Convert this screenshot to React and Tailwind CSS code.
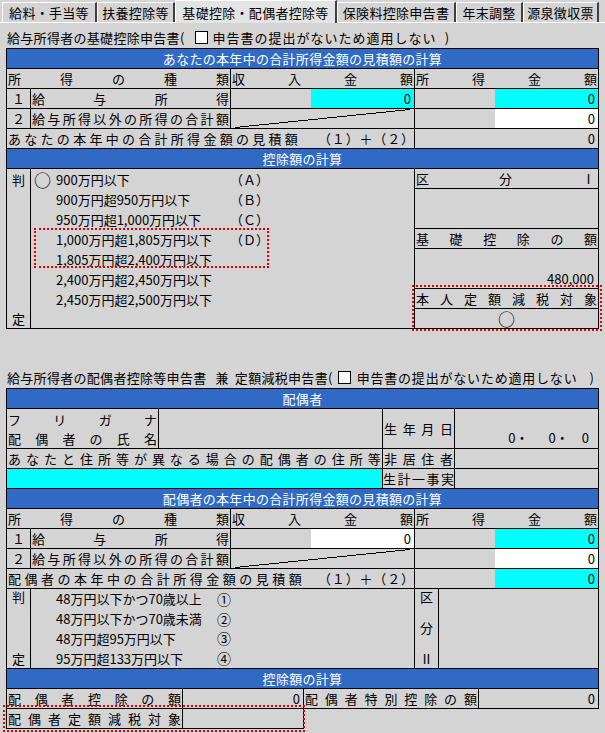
import React from 'react';

// spread characters across the cell, like the fixed-pitch form labels
const Sp = ({ t, className = '' }) => (
  <div className={`flex justify-between ${className}`}>
    {Array.from(t).map((c, i) => (
      <span key={i}>{c}</span>
    ))}
  </div>
);

const Head = ({ children }) => (
  <div className="flex h-[20px] items-center justify-center border-b border-black bg-[#316ac5] text-white tracking-[0.3px]">
    {children}
  </div>
);

const Box = ({ className = '' }) => (
  <span className={`inline-block h-[13px] w-[13px] shrink-0 border border-black bg-white ${className}`} />
);

const Zero = ({ bg }) => (
  <div className={`flex flex-1 items-center justify-end pr-[3px] ${bg}`}>0</div>
);

const Diagonal = () => (
  <svg
    className="absolute inset-0 h-full w-full"
    viewBox="0 0 183 19"
    preserveAspectRatio="none"
    shapeRendering="crispEdges"
  >
    <line x1="4" y1="18.5" x2="179" y2="0.5" stroke="#000" strokeWidth="1" />
  </svg>
);

const IncomeBlock = ({ incomeBg, totalLabel, totalW, totalBg }) => (
  <>
    <div className="flex h-[20px] border-b border-black">
      <div className="flex w-[224px] items-center border-r border-black px-px">
        <Sp t="所得の種類" className="w-full" />
      </div>
      <div className="flex w-[184px] items-center border-r border-black px-px">
        <Sp t="収入金額" className="w-full" />
      </div>
      <div className="flex flex-1 items-center px-px">
        <Sp t="所得金額" className="w-full" />
      </div>
    </div>
    <div className="flex h-[20px] border-b border-black">
      <div className="flex w-[24px] items-center justify-center border-r border-black">１</div>
      <div className="flex w-[200px] items-center border-r border-black px-px">
        <Sp t="給与所得" className="w-full" />
      </div>
      <div className="flex w-[184px] border-r border-black">
        <div className="w-[80px]" />
        <Zero bg={incomeBg} />
      </div>
      <div className="flex flex-1">
        <div className="w-[80px]" />
        <Zero bg="bg-[#00ffff]" />
      </div>
    </div>
    <div className="flex h-[20px] border-b border-black">
      <div className="flex w-[24px] items-center justify-center border-r border-black">２</div>
      <div className="flex w-[200px] items-center border-r border-black px-px">
        <Sp t="給与所得以外の所得の合計額" className="w-full" />
      </div>
      <div className="relative w-[184px] border-r border-black">
        <Diagonal />
      </div>
      <div className="flex flex-1">
        <div className="w-[80px]" />
        <Zero bg="bg-white" />
      </div>
    </div>
    <div className="flex h-[20px] border-b border-black">
      <div className="flex w-[408px] items-center border-r border-black pl-px">
        <Sp t={totalLabel} className={totalW} />
        <Sp t="（１）＋（２）" className="ml-auto w-[96px]" />
      </div>
      <div className="flex flex-1">
        <div className="w-[80px]" />
        <Zero bg={totalBg} />
      </div>
    </div>
  </>
);

const tabs = [
  { label: '給料・手当等', w: 'w-[95px]' },
  { label: '扶養控除等', w: 'w-[78px]' },
  { label: '基礎控除・配偶者控除等', w: 'w-[162px]', active: true },
  { label: '保険料控除申告書', w: 'w-[119px]' },
  { label: '年末調整', w: 'w-[67px]' },
  { label: '源泉徴収票', w: 'w-[76px]' },
];

const basicItems = [
  { text: '900万円以下', key: '（Ａ）', mark: true },
  { text: '900万円超950万円以下', key: '（Ｂ）' },
  { text: '950万円超1,000万円以下', key: '（Ｃ）' },
  { text: '1,000万円超1,805万円以下', key: '（Ｄ）' },
  { text: '1,805万円超2,400万円以下' },
  { text: '2,400万円超2,450万円以下' },
  { text: '2,450万円超2,500万円以下' },
];

const spouseItems = [
  { text: '48万円以下かつ70歳以上', key: '①' },
  { text: '48万円以下かつ70歳未満', key: '②' },
  { text: '48万円超95万円以下', key: '③' },
  { text: '95万円超133万円以下', key: '④' },
];

export default function App() {
  return (
    <div className="relative h-[733px] w-[605px] overflow-hidden bg-[#d4d4d4] font-['Noto_Sans_CJK_JP','Noto_Sans_CJK_SC',sans-serif] text-[13px] leading-none text-black">
      {/* Tabs */}
      <div className="flex h-[22px] pl-[2px]">
        {tabs.map((tab) =>
          tab.active ? (
            <div
              key={tab.label}
              className={`relative z-10 flex h-[23px] items-center justify-center border-l border-t border-r-2 border-white border-r-[#404040] bg-[#e4e4e4] tracking-[0.3px] ${tab.w}`}
            >
              {tab.label}
            </div>
          ) : (
            <div
              key={tab.label}
              className={`mt-[2px] flex h-[20px] items-center justify-center border-l border-t border-r-2 border-white border-r-[#404040] tracking-[0.3px] ${tab.w}`}
            >
              {tab.label}
            </div>
          )
        )}
      </div>

      <div className="border-t border-white">
        {/* 基礎控除申告書 */}
        <div className="flex h-[25px] items-center pl-[7px] pt-[3px] tracking-[0.3px]">
          <span>給与所得者の基礎控除申告書(</span>
          <Box className="ml-[10px]" />
          <span className="ml-[5px] tracking-[1px]">申告書の提出がないため適用しない</span>
          <span className="ml-[8px]">)</span>
        </div>

        <div className="ml-[6px] w-[593px] border border-black">
          <Head>あなたの本年中の合計所得金額の見積額の計算</Head>
          <IncomeBlock
            incomeBg="bg-[#00ffff]"
            totalLabel="あなたの本年中の合計所得金額の見積額"
            totalW="w-[290px]"
            totalBg=""
          />
          <Head>控除額の計算</Head>
          <div className="flex h-[159px]">
            <div className="flex w-[24px] flex-col items-center justify-between border-r border-black">
              <div className="flex h-[20px] items-center">判</div>
              <div className="flex h-[19px] items-center">定</div>
            </div>
            <div className="flex w-[384px] flex-col border-r border-black">
              {basicItems.map((it) => (
                <div key={it.text} className="flex h-[20px] shrink-0 items-center">
                  <span className="flex w-[25px] items-center pl-[3px] text-[17px] leading-none">
                    {it.mark ? '○' : ''}
                  </span>
                  <span className="w-[174px]">{it.text}</span>
                  <span>{it.key}</span>
                </div>
              ))}
            </div>
            <div className="flex flex-1 flex-col">
              <div className="flex h-[20px] items-center border-b border-black pl-px pr-[3px]">
                <Sp t="区分Ⅰ" className="w-full" />
              </div>
              <div className="h-[40px] border-b border-black" />
              <div className="flex h-[20px] items-center border-b border-black px-px">
                <Sp t="基礎控除の額" className="w-full" />
              </div>
              <div className="flex h-[40px] items-end justify-end border-b border-black pb-[3px] pr-[4px]">
                480,000
              </div>
              <div className="flex h-[20px] items-center border-b border-black px-px">
                <Sp t="本人定額減税対象" className="w-full" />
              </div>
              <div className="flex flex-1 items-center justify-center text-[17px]">○</div>
            </div>
          </div>
        </div>

        {/* 配偶者控除等申告書 */}
        <div className="mt-[38px] flex h-[20px] items-center pl-[7px] tracking-[0.3px]">
          <span>給与所得者の配偶者控除等申告書</span>
          <span className="ml-[9px]">兼</span>
          <span className="ml-[6px]">定額減税申告書(</span>
          <Box className="ml-[5px]" />
          <span className="ml-[6px] tracking-[0.8px]">申告書の提出がないため適用しない</span>
          <span className="ml-[12px]">)</span>
        </div>

        <div className="ml-[6px] mt-px w-[593px] border border-black">
          <Head>配偶者</Head>
          <div className="flex h-[40px] border-b border-black">
            <div className="flex w-[152px] flex-col border-r border-black px-px">
              <div className="flex h-[20px] items-center">
                <Sp t="フリガナ" className="w-full" />
              </div>
              <div className="flex h-[19px] items-center">
                <Sp t="配偶者の氏名" className="w-full" />
              </div>
            </div>
            <div className="w-[224px] border-r border-black" />
            <div className="flex w-[72px] items-center border-r border-black px-px">
              <Sp t="生年月日" className="w-full" />
            </div>
            <div className="flex flex-1 items-end justify-end pb-[4px] pr-[9px]">
              <span>0・</span>
              <span className="ml-[20px]">0・</span>
              <span className="ml-[13px]">0</span>
            </div>
          </div>
          <div className="flex h-[20px] border-b border-black">
            <div className="flex w-[376px] items-center border-r border-black px-px">
              <Sp t="あなたと住所等が異なる場合の配偶者の住所等" className="w-full" />
            </div>
            <div className="flex w-[72px] items-center border-r border-black px-px">
              <Sp t="非居住者" className="w-full" />
            </div>
            <div className="flex-1" />
          </div>
          <div className="flex h-[20px] border-b border-black">
            <div className="w-[376px] border-r border-black bg-[#00ffff]" />
            <div className="flex w-[72px] items-center border-r border-black">
              <Sp t="生計一事実" className="w-full" />
            </div>
            <div className="flex-1" />
          </div>
          <Head>配偶者の本年中の合計所得金額の見積額の計算</Head>
          <IncomeBlock
            incomeBg="bg-white"
            totalLabel="配偶者の本年中の合計所得金額の見積額"
            totalW="w-[294px]"
            totalBg="bg-[#00ffff]"
          />
          <div className="flex h-[80px] border-b border-black">
            <div className="flex w-[24px] flex-col items-center justify-between border-r border-black pb-[3px] pt-[1px] leading-[13px]">
              <span>判</span>
              <span>定</span>
            </div>
            <div className="flex w-[384px] flex-col border-r border-black">
              {spouseItems.map((it) => (
                <div key={it.text} className="flex h-[20px] items-center">
                  <span className="w-[25px]" />
                  <span className="w-[161px]">{it.text}</span>
                  <span className="text-[14px] leading-none">{it.key}</span>
                </div>
              ))}
            </div>
            <div className="flex w-[24px] flex-col items-center justify-between border-r border-black pb-[3px] pt-[1px] leading-[13px]">
              <span>区</span>
              <span>分</span>
              <span>Ⅱ</span>
            </div>
            <div className="flex-1" />
          </div>
          <Head>控除額の計算</Head>
          <div className="flex h-[19px]">
            <div className="flex w-[176px] items-center border-r border-black px-px">
              <Sp t="配偶者控除の額" className="w-full" />
            </div>
            <div className="flex w-[121px] items-center justify-end border-r border-black pr-[3px]">0</div>
            <div className="flex w-[175px] items-center border-r border-black px-px">
              <Sp t="配偶者特別控除の額" className="w-full" />
            </div>
            <div className="flex flex-1 items-center justify-end pr-[3px]">0</div>
          </div>
        </div>
        <div className="ml-[6px] flex h-[20px] w-[298px] border-x border-b border-black">
          <div className="flex w-[176px] items-center border-r border-black px-px">
            <Sp t="配偶者定額減税対象" className="w-full" />
          </div>
          <div className="flex-1" />
        </div>
      </div>

      {/* red dotted highlight frames */}
      <div className="pointer-events-none absolute left-[34px] top-[228px] h-[40px] w-[235px] border-2 border-dotted border-[#e60000]" />
      <div className="pointer-events-none absolute left-[412px] top-[285px] h-[46px] w-[190px] border-2 border-dotted border-[#e60000]" />
      <div className="pointer-events-none absolute left-[3px] top-[705px] h-[27px] w-[302px] border-2 border-dotted border-[#e60000]" />
    </div>
  );
}
